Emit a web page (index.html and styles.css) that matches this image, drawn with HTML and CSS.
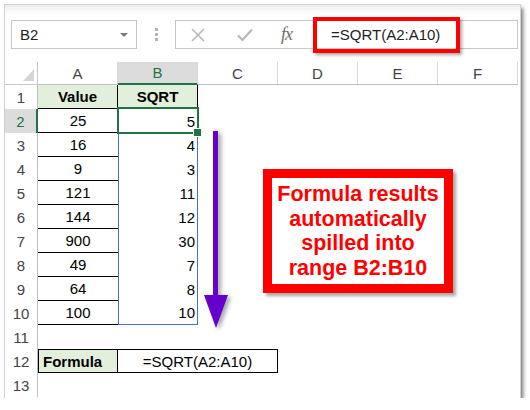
FILE: index.html
```html
<!DOCTYPE html>
<html>
<head>
<meta charset="utf-8">
<link rel="stylesheet" href="styles.css">
</head>
<body>
<div class="window">
  <div class="toolbar">
    <div class="namebox"><span class="nb-text">B2</span><span class="caret"></span></div>
    <div class="grip"><i></i><i></i><i></i></div>
    <div class="fbar">
      <svg class="ficon cancel" width="14" height="14" viewBox="0 0 14 14"><path d="M1 1 L13 13 M13 1 L1 13" stroke="#b8b8b8" stroke-width="1.6" fill="none"/></svg>
      <svg class="ficon enter" width="16" height="14" viewBox="0 0 16 14"><path d="M1 7.5 L5.5 12 L15 1.5" stroke="#b8b8b8" stroke-width="2.2" fill="none"/></svg>
      <span class="fx">fx</span>
      <span class="ftext">=SQRT(A2:A10)</span>
    </div>
  </div>
  <div class="sheet">
    <div class="corner"><span class="tri"></span></div>
    <div class="ch">A</div><div class="ch on">B</div><div class="ch">C</div><div class="ch">D</div><div class="ch">E</div><div class="ch">F</div>

    <div class="rh">1</div><div class="c hdr">Value</div><div class="c hdr">SQRT</div><div></div><div></div><div></div><div></div>
    <div class="rh on">2</div><div class="c a">25</div><div class="c b sel">5</div><div></div><div></div><div></div><div></div>
    <div class="rh">3</div><div class="c a">16</div><div class="c b">4</div><div></div><div></div><div></div><div></div>
    <div class="rh">4</div><div class="c a">9</div><div class="c b">3</div><div></div><div></div><div></div><div></div>
    <div class="rh">5</div><div class="c a">121</div><div class="c b">11</div><div></div><div></div><div></div><div></div>
    <div class="rh">6</div><div class="c a">144</div><div class="c b">12</div><div></div><div></div><div></div><div></div>
    <div class="rh">7</div><div class="c a">900</div><div class="c b">30</div><div></div><div></div><div></div><div></div>
    <div class="rh">8</div><div class="c a">49</div><div class="c b">7</div><div></div><div></div><div></div><div></div>
    <div class="rh">9</div><div class="c a">64</div><div class="c b">8</div><div></div><div></div><div></div><div></div>
    <div class="rh">10</div><div class="c a">100</div><div class="c b last">10</div><div></div><div></div><div></div><div></div>
    <div class="rh">11</div><div></div><div></div><div></div><div></div><div></div><div></div>
    <div class="rh">12</div><div class="c flabel">Formula</div><div class="c fcell">=SQRT(A2:A10)</div><div></div><div></div><div></div>
    <div class="rh">13</div><div></div><div></div><div></div><div></div><div></div><div></div>
  </div>

  <div class="hl-formula"></div>
  <svg class="arrow" width="30" height="200" viewBox="0 0 30 200">
    <rect x="10" y="0" width="5" height="166" fill="#6600cc"/>
    <polygon points="1,164 25,164 13,197" fill="#6600cc"/>
  </svg>
  <div class="callout">Formula results<br>automatically<br>spilled into<br>range B2:B10</div>
</div>
</body>
</html>
```
FILE: styles.css
```css
* { box-sizing: border-box; }
html, body { margin: 0; padding: 0; background: #fff; }
body { font-family: "Liberation Sans", Arial, sans-serif; }

.window {
  position: relative;
  margin: 5px 0 0 5px;
  width: 515px;
  height: 393px;
  background: #fff;
  box-shadow: 0 0 0 1px #d0d0d0, 3px 3px 4px rgba(0,0,0,0.55);
}

.toolbar {
  display: flex;
  align-items: flex-start;
  height: 57px;
  padding: 15px 0 0 6px;
  background: linear-gradient(#ececec 0, #fafafa 6px, #fff 12px);
}
.namebox {
  display: flex;
  align-items: center;
  justify-content: space-between;
  width: 126px;
  height: 29px;
  border: 1px solid #c6c6c6;
  background: #fff;
  padding: 0 8px 0 8px;
  font-size: 15px;
  color: #222;
}
.caret {
  width: 0; height: 0;
  border-left: 4px solid transparent;
  border-right: 4px solid transparent;
  border-top: 4px solid #7a7a7a;
}
.grip {
  width: 38px;
  height: 29px;
  display: flex;
  flex-direction: column;
  align-items: center;
  justify-content: center;
  gap: 2px;
}
.grip i { display: block; width: 3px; height: 3px; background: #b4b4b4; }
.fbar {
  display: flex;
  align-items: center;
  width: 343px;
  height: 29px;
  border: 1px solid #c6c6c6;
  background: #fff;
  padding-left: 15px;
}
.cancel { margin-right: 32px; }
.enter { margin-right: 28px; }
.fx {
  font-family: "Liberation Serif", serif;
  font-style: italic;
  font-size: 18px;
  color: #6e6e6e;
  width: 16px;
  margin-right: 34px;
  letter-spacing: -1px;
}
.ftext { font-size: 15px; color: #1e1e1e; }

.sheet {
  display: grid;
  grid-template-columns: 33px repeat(6, 80px);
  grid-template-rows: 23px repeat(13, 24px);
  font-size: 15px;
  color: #000;
}
.corner {
  position: relative;
  border-right: 1px solid #c8c8c8;
  border-bottom: 1px solid #c8c8c8;
}
.tri {
  position: absolute;
  right: 3px; bottom: 3px;
  width: 0; height: 0;
  border-left: 11px solid transparent;
  border-bottom: 12px solid #d6d6d6;
}
.ch {
  display: flex; align-items: center; justify-content: center;
  border-right: 1px solid #d8d8d8;
  border-bottom: 1px solid #c0c0c0;
  color: #444;
}
.ch.on { background: #dcdcdc; color: #217346; border-bottom: 2px solid #217346; }
.rh {
  display: flex; align-items: center; justify-content: center;
  border-right: 1px solid #c0c0c0;
  color: #444;
}
.rh.on { background: #dcdcdc; color: #217346; border-right: 2px solid #217346; }

.c { display: flex; align-items: center; }
.hdr {
  justify-content: center;
  font-weight: bold;
  background: #e2efda;
  border-right: 1px solid #000;
  border-bottom: 1px solid #000;
}
.a { justify-content: center; border-bottom: 1px solid #000; }
.b {
  justify-content: flex-end;
  padding-right: 2px;
  border-left: 1px solid #4472c4;
  border-right: 1px solid #4472c4;
}
.b.last { border-bottom: 1px solid #4472c4; }
.sel { position: relative; }
.sel::before {
  content: "";
  position: absolute;
  left: -2px; top: -2px; right: -2px; bottom: -1px;
  border: 2px solid #217346;
}
.sel::after {
  content: "";
  position: absolute;
  right: -5px; bottom: -4px;
  width: 7px; height: 7px;
  background: #217346;
  border: 1px solid #fff;
}
.flabel {
  font-weight: bold;
  padding-left: 4px;
  background: #e2efda;
  border: 1px solid #000;
}
.fcell {
  grid-column: span 2;
  justify-content: center;
  border-top: 1px solid #000;
  border-right: 1px solid #000;
  border-bottom: 1px solid #000;
}

.hl-formula {
  position: absolute;
  left: 308px; top: 12px;
  width: 147px; height: 36px;
  border: 4px solid #ff0000;
  box-shadow: 2px 2px 3px rgba(0,0,0,0.35);
}
.arrow {
  position: absolute;
  left: 198px; top: 126px;
  filter: drop-shadow(3px 2px 2px rgba(0,0,0,0.35));
}
.callout {
  position: absolute;
  left: 258px; top: 164px;
  width: 190px; height: 124px;
  border: 9px solid #ff0000;
  background: #fff;
  box-shadow: 3px 3px 3px rgba(0,0,0,0.35);
  color: #ff0000;
  font-weight: bold;
  font-size: 21.5px;
  line-height: 24.5px;
  text-align: center;
  padding-top: 4px;
}
```
